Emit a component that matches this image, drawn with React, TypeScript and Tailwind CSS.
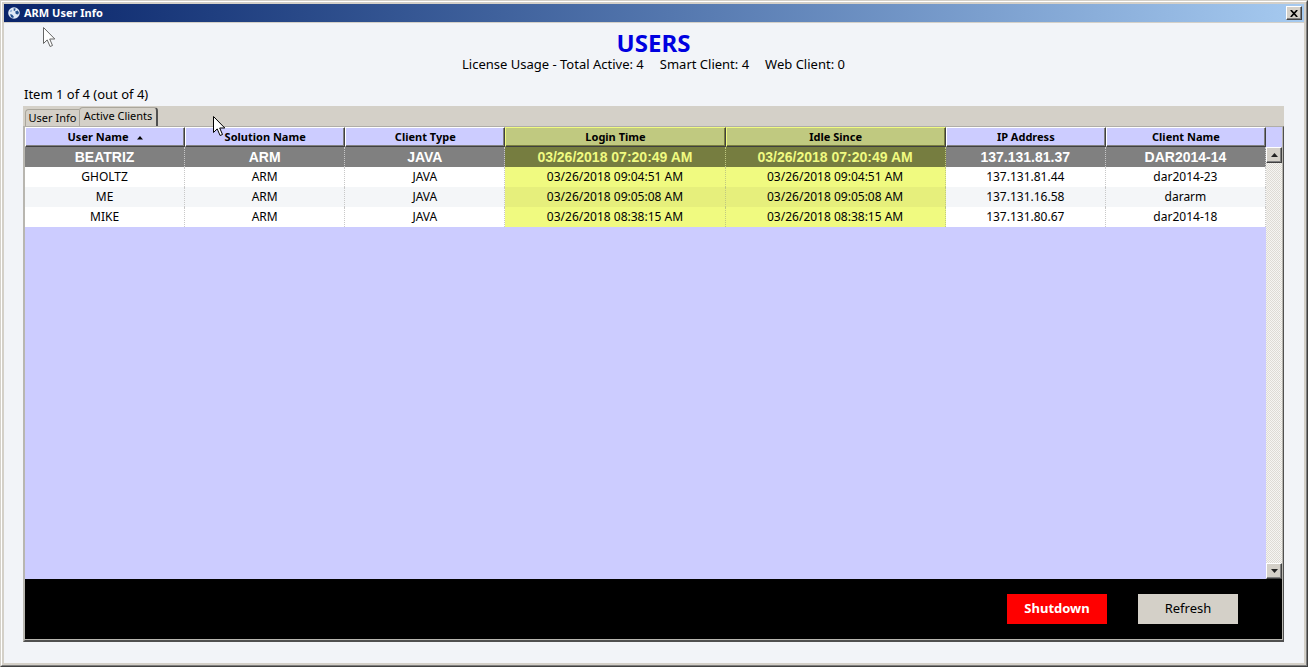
import { useState } from "react";
import clsx from "clsx";

const columns = [
  { key: "user", label: "User Name", width: "w-[160px]", marked: false },
  { key: "solution", label: "Solution Name", width: "w-[160px]", marked: false },
  { key: "type", label: "Client Type", width: "w-[160px]", marked: false },
  { key: "login", label: "Login Time", width: "w-[220px]", marked: true },
  { key: "idle", label: "Idle Since", width: "w-[220px]", marked: true },
  { key: "ip", label: "IP Address", width: "w-[160px]", marked: false },
  { key: "client", label: "Client Name", width: "w-[160px]", marked: false },
] as const;

const clients = [
  { user: "BEATRIZ", solution: "ARM", type: "JAVA", login: "03/26/2018 07:20:49 AM", idle: "03/26/2018 07:20:49 AM", ip: "137.131.81.37", client: "DAR2014-14" },
  { user: "GHOLTZ", solution: "ARM", type: "JAVA", login: "03/26/2018 09:04:51 AM", idle: "03/26/2018 09:04:51 AM", ip: "137.131.81.44", client: "dar2014-23" },
  { user: "ME", solution: "ARM", type: "JAVA", login: "03/26/2018 09:05:08 AM", idle: "03/26/2018 09:05:08 AM", ip: "137.131.16.58", client: "dararm" },
  { user: "MIKE", solution: "ARM", type: "JAVA", login: "03/26/2018 08:38:15 AM", idle: "03/26/2018 08:38:15 AM", ip: "137.131.80.67", client: "dar2014-18" },
];

const raised =
  "flex items-center justify-center border border-t-white border-l-white border-r-[#404040] border-b-[#404040] bg-[#d4d0c8] shadow-[inset_-1px_-1px_0_#808080]";

const Pointer = ({ className }: { className: string }) => (
  <svg className={className} width="13" height="21" viewBox="0 0 13 21" aria-hidden="true">
    <path d="M.5 .5v16l3.7-3.6 2.9 6.6 2.4-1-2.8-6.5h5.1z" fill="#fff" stroke="currentColor" strokeWidth="1" />
  </svg>
);

const AppIcon = () => (
  <svg width="12" height="12" viewBox="0 0 12 12" aria-hidden="true">
    <circle cx="6" cy="6" r="5.8" fill="#dfe9f6" />
    <path d="M5.6 1.2l2 .4-.4 1.8-1.4.6zM7.2 4.4l2.6-1 1.2 2.4-1 1.8-2.2-.6zM2 7.2l2 .4 1.8 1.8-.6 1.6-2-.8z" fill="#24508f" />
    <path d="M1.6 4.4l1.6-1.8 1 .8-1 1.8z" fill="#8fb0d8" />
  </svg>
);

const cellColor = (selected: boolean, marked: boolean, shaded: boolean) => {
  if (selected) return marked ? "bg-[#767d40] text-[#f0fa80]" : "bg-[#808080] text-white";
  if (marked) return shaded ? "bg-[#e6ef7c]" : "bg-[#f0fa80]";
  return shaded ? "bg-[#f4f6f8]" : "bg-white";
};

const ClientTable = () => {
  const [selected, setSelected] = useState(0);

  return (
    <table className="w-full table-fixed border-separate border-spacing-0 text-center">
      <thead>
        <tr>
          {columns.map((c) => (
            <th
              key={c.key}
              scope="col"
              className={clsx(
                "h-5 border-t border-l border-r border-b border-r-[#404040] border-b-[#404040] p-0 text-[11px] leading-4 font-bold",
                c.width,
                c.marked
                  ? "border-t-[#f0fa80] border-l-[#f0fa80] bg-[#c0c980] shadow-[inset_-1px_-1px_0_#787d40]"
                  : "border-t-white border-l-white bg-[#ccccff] shadow-[inset_-1px_-1px_0_#808080]"
              )}
            >
              {c.label}
              {c.key === "user" && (
                <svg className="ml-2 inline-block align-middle" width="6" height="4" viewBox="0 0 6 4" aria-label="ascending">
                  <path d="M3 0l3 3.5H0z" />
                </svg>
              )}
            </th>
          ))}
        </tr>
      </thead>
      <tbody>
        {clients.map((row, i) => (
          <tr key={row.user} onClick={() => setSelected(i)}>
            {columns.map((c) => (
              <td
                key={c.key}
                className={clsx(
                  "h-5 border-r border-dotted p-0 leading-4",
                  c.marked ? "border-r-[#c0c980]" : "border-r-[#c8c8c8]",
                  selected === i ? "font-['Liberation_Sans',sans-serif] text-[14px] font-bold" : "text-[12px]",
                  cellColor(selected === i, c.marked, i > 0 && i % 2 === 0)
                )}
              >
                {row[c.key]}
              </td>
            ))}
          </tr>
        ))}
      </tbody>
    </table>
  );
};

const ScrollBar = () => (
  <div className="flex w-4 shrink-0 flex-col bg-[#ccccff] pt-5">
    <button type="button" aria-label="Scroll up" className={clsx(raised, "h-4 w-full")}>
      <svg width="7" height="4" viewBox="0 0 7 4"><path d="M3.5 0L7 4H0z" fill="#222" /></svg>
    </button>
    <div className="flex-1 bg-[#ebe9e4] bg-[repeating-conic-gradient(#dedbd5_0_25%,#f6f5f2_0_50%)] bg-[length:2px_2px]" />
    <button type="button" aria-label="Scroll down" className={clsx(raised, "h-4 w-full")}>
      <svg width="7" height="4" viewBox="0 0 7 4"><path d="M0 0h7L3.5 4z" fill="#222" /></svg>
    </button>
  </div>
);

export default function App() {
  return (
    <div className="relative flex min-h-screen flex-col border border-t-[#d4d0c8] border-l-[#d4d0c8] border-r-[#404040] border-b-[#404040] bg-[#f2f4f8] font-['Noto_Sans',sans-serif] text-black">
      <div className="flex flex-1 flex-col border border-t-white border-l-white border-r-[#808080] border-b-[#808080]">
        <div className="flex flex-1 flex-col border-2 border-[#d4d0c8]">
          <header className="flex h-[19px] items-center gap-1 border-b border-[#d4d0c8] bg-linear-to-r from-[#0a246a] to-[#a6caf0] pr-0.5 pl-1">
            <AppIcon />
            <h1 className="flex-1 text-[11px] leading-4 font-bold text-white">ARM User Info</h1>
            <button type="button" aria-label="Close" className={clsx(raised, "h-3.5 w-4")}>
              <svg width="8" height="7" viewBox="0 0 8 7"><path d="M.8 0L7.2 7M7.2 0L.8 7" stroke="#000" strokeWidth="1.7" /></svg>
            </button>
          </header>

          <main className="flex flex-1 flex-col pt-[7px] pr-5 pb-[21px] pl-[19px]">
            <div className="text-center">
              <h2 className="text-[24px] leading-[26px] font-bold text-[#0000e0]">USERS</h2>
              <p className="flex justify-center gap-4 text-[13px] leading-4">
                <span>License Usage - Total Active: 4</span>
                <span>Smart Client: 4</span>
                <span>Web Client: 0</span>
              </p>
            </div>
            <p className="mt-3 mb-0.5 pl-px text-[13px] leading-5">Item 1 of 4 (out of 4)</p>

            <div className="flex flex-1 flex-col">
              <div role="tablist" className="flex h-5 items-end bg-[#d4d0c8] pl-0.5 text-[11px] leading-4">
                <button type="button" role="tab" aria-selected="false" className="h-[17px] w-[54px] rounded-tl-sm border-t border-l border-[#aaa69c]">
                  User Info
                </button>
                <button type="button" role="tab" aria-selected="true" className="h-[19px] w-[79px] rounded-t-sm border-t border-r-2 border-l border-t-[#aaa69c] border-r-[#505050] border-l-[#aaa69c] pb-0.5">
                  Active Clients
                </button>
              </div>

              <div className="flex flex-1 flex-col border-t border-r border-b-2 border-l-2 border-t-[#b0aea8] border-r-[#505050] border-b-[#505050] border-l-[#b8b6b0]">
                <div className="flex flex-1 flex-col border-r border-b border-[#b8b6b0]">
                  <div className="flex flex-1 bg-[#ccccff]">
                    <div className="flex-1">
                      <ClientTable />
                    </div>
                    <ScrollBar />
                  </div>
                  <footer className="flex h-[60px] items-center justify-end gap-[31px] bg-black pr-11 text-[13px]">
                    <button type="button" className="h-[30px] w-[100px] bg-[#ff0000] font-bold text-white">
                      Shutdown
                    </button>
                    <button type="button" className="h-[30px] w-[100px] bg-[#d4d0c8]">Refresh</button>
                  </footer>
                </div>
              </div>
            </div>
          </main>
        </div>
      </div>

      <Pointer className="absolute top-[26px] left-[42px] text-[#666]" />
      <Pointer className="absolute top-[115px] left-[212px] text-black" />
    </div>
  );
}
